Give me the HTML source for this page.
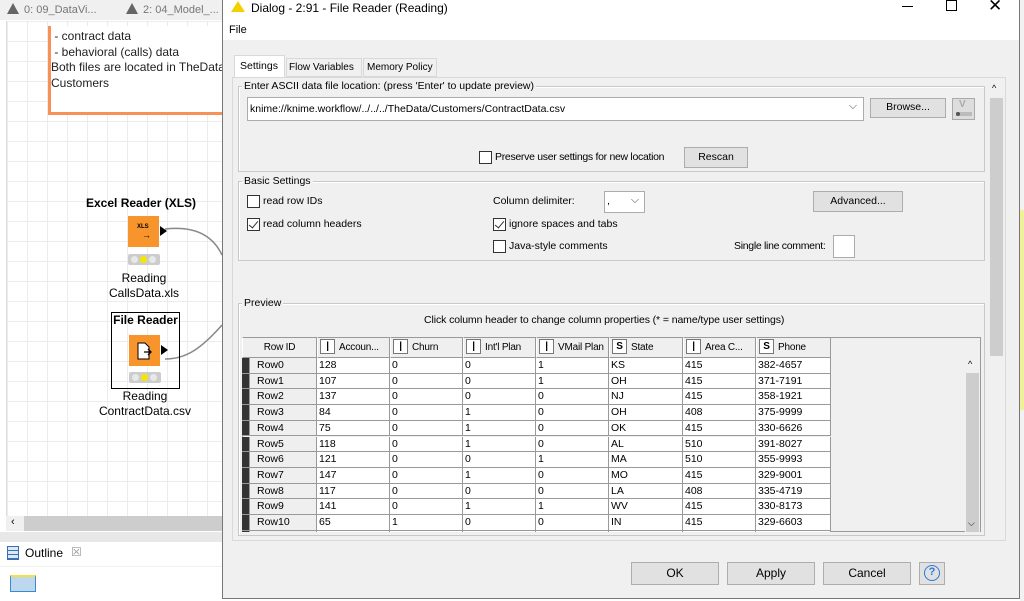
<!DOCTYPE html>
<html><head><meta charset="utf-8"><style>
*{box-sizing:border-box;margin:0;padding:0}
body{width:1024px;height:601px;overflow:hidden;position:relative;background:#fff;font-family:"Liberation Sans",sans-serif;font-size:10.5px;color:#000;white-space:nowrap}
.a{position:absolute}
.grid{background-color:#fff;background-image:linear-gradient(#ececec 1px,transparent 1px),linear-gradient(90deg,#ececec 1px,transparent 1px);background-size:20px 20px}
.btn{position:absolute;background:#e1e1e1;border:1px solid #adadad;text-align:center;font-size:10.5px}
.fs{position:absolute;border:1px solid #c8c8c8;box-shadow:inset 1px 1px 0 #fff}
.lg{position:absolute;background:#f0f0f0;padding:0 2px;font-size:10.5px}
.cb{position:absolute;width:13px;height:13px;border:1px solid #333;background:#fff}
.ck::after{content:"";position:absolute;left:3px;top:0px;width:4px;height:8px;border:solid #333;border-width:0 1px 1px 0;transform:rotate(40deg)}
.row{position:absolute;left:242px;height:15.7px;display:flex;font-size:10.5px}
.row div{border-right:1px solid #999;border-bottom:1px solid #999;background:#fff;padding-left:2px;line-height:14px;overflow:hidden;white-space:nowrap}
.hd{position:absolute;top:337px;height:21px;display:flex}
.hd div{background:#efefef;border:1px solid #999;border-left:1px solid #fff;font-size:10px;line-height:19px;white-space:nowrap;overflow:hidden;letter-spacing:-0.2px}
.ti{display:inline-block;width:15px;height:15px;border:1px solid #777;background:#fff;text-align:center;line-height:13px;font-size:10px;font-weight:bold;margin:1px 4px 0 2px;vertical-align:top}
</style></head><body>
<div class="a" style="left:0;top:0;width:222px;height:20px;background:#f0f0f0;color:#777;font-size:11px">
<span class="a" style="left:7px;top:3px;width:0;height:0;border-left:6px solid transparent;border-right:6px solid transparent;border-bottom:11px solid #666"></span>
<span class="a" style="left:24px;top:4px">0: 09_DataVi...</span>
<span class="a" style="left:126px;top:3px;width:0;height:0;border-left:6px solid transparent;border-right:6px solid transparent;border-bottom:11px solid #666"></span>
<span class="a" style="left:143px;top:4px">2: 04_Model_...</span>
</div>
<div class="a grid" style="left:6px;top:21px;width:216px;height:495px;border-left:1px solid #ddd"></div>
<div class="a" style="left:48px;top:26px;width:174px;height:89px;background:#fff;border-left:3px solid #f7915a;border-bottom:3px solid #f7915a"></div>
<div class="a" style="left:51px;top:29px;font-size:12px;line-height:15.5px;color:#222;white-space:nowrap;width:171px;overflow:hidden"> &nbsp;- contract data<br> &nbsp;- behavioral (calls) data<br>Both files are located in TheData/<br>Customers</div>
<div class="a" style="left:86px;top:196px;font-weight:bold;font-size:12px">Excel Reader (XLS)</div>
<div class="a" style="left:128px;top:216px;width:31px;height:31px;background:#f7942c"><span class="a" style="left:9px;top:8px;font-size:6px;font-weight:bold">XLS</span><span class="a" style="left:14px;top:14px;font-size:9px;font-weight:bold">→</span></div>
<div class="a" style="left:160px;top:226px;border-top:5px solid transparent;border-bottom:5px solid transparent;border-left:7px solid #000"></div>
<div class="a" style="left:128px;top:254px;width:32px;height:11px;background:#ccc;border-radius:2px"><span class="a" style="left:3px;top:2px;width:7px;height:7px;border-radius:50%;background:#e8e8e8"></span><span class="a" style="left:12px;top:2px;width:7px;height:7px;border-radius:50%;background:#f5e600"></span><span class="a" style="left:21px;top:2px;width:7px;height:7px;border-radius:50%;background:#e8e8e8"></span></div>
<div class="a" style="left:100px;top:271px;width:88px;text-align:center;font-size:12px;line-height:15px">Reading<br>CallsData.xls</div>
<svg class="a" style="left:160px;top:220px" width="64" height="140"><path d="M5 9 C40 5 55 20 62 35" stroke="#888" stroke-width="1.5" fill="none"/><path d="M5 139 C25 139 40 130 62 105" stroke="#888" stroke-width="1.5" fill="none"/></svg>
<div class="a" style="left:111px;top:312px;width:69px;height:77px;border:1px solid #000"></div>
<div class="a" style="left:112px;top:313px;width:67px;text-align:center;font-weight:bold;font-size:12px">File Reader</div>
<div class="a" style="left:129px;top:335px;width:31px;height:31px;background:#f7942c"><svg width="31" height="31"><path d="M9 8h7l4 4v12H9z" fill="#fff" stroke="#000"/><path d="M15 17h7M19 14l3 3-3 3" stroke="#000" fill="none" stroke-width="1.3"/></svg></div>
<div class="a" style="left:161px;top:345px;border-top:5px solid transparent;border-bottom:5px solid transparent;border-left:7px solid #000"></div>
<div class="a" style="left:129px;top:372px;width:32px;height:11px;background:#ccc;border-radius:2px"><span class="a" style="left:3px;top:2px;width:7px;height:7px;border-radius:50%;background:#e8e8e8"></span><span class="a" style="left:12px;top:2px;width:7px;height:7px;border-radius:50%;background:#f5e600"></span><span class="a" style="left:21px;top:2px;width:7px;height:7px;border-radius:50%;background:#e8e8e8"></span></div>
<div class="a" style="left:90px;top:389px;width:110px;text-align:center;font-size:12px;line-height:15px">Reading<br>ContractData.csv</div>
<div class="a" style="left:6px;top:516px;width:216px;height:15px;background:#f0f0f0"><div class="a" style="left:18px;top:0;width:198px;height:15px;background:#cdcdcd"></div><span class="a" style="left:5px;top:0px;font-size:11px">‹</span></div>
<div class="a" style="left:0;top:532px;width:222px;height:10px;background:#e8e8e8"></div>
<div class="a" style="left:0;top:542px;width:222px;height:59px;background:#fff"></div>
<div class="a" style="left:0;top:566px;width:222px;height:1px;background:#f0f0f0"></div>
<div class="a" style="left:7px;top:546px;width:12px;height:14px;border:1px solid #3a70b0;background:repeating-linear-gradient(#dbe8f5 0 3px,#3a70b0 3px 4px)"></div>
<div class="a" style="left:25px;top:546px;font-size:12px">Outline</div>
<div class="a" style="left:71px;top:545px;color:#999;font-size:12px">☒</div>
<div class="a" style="left:10px;top:575px;width:26px;height:17px;border:1px solid #3a8ad0;border-top:2px solid #f3e23c;background:#bcd7ee"></div>
<!-- dialog -->
<div class="a" style="left:222px;top:0;width:798px;height:599px;background:#f0f0f0;border:1px solid #777;border-top:none"></div>
<div class="a" style="left:1020px;top:0;width:4px;height:601px;background:#f2f2f2"></div>
<div class="a" style="left:1020px;top:210px;width:4px;height:200px;background:#f0ef9a"></div>
<div class="a" style="left:223px;top:0;width:796px;height:40px;background:#fff"></div>
<div class="a" style="left:231px;top:1px;width:0;height:0;border-left:7px solid transparent;border-right:7px solid transparent;border-bottom:11px solid #f5d000"></div>
<div class="a" style="left:251px;top:1px;font-size:12px">Dialog - 2:91 - File Reader (Reading)</div>
<div class="a" style="left:229px;top:24px;font-size:11px">File</div>
<div class="a" style="left:902px;top:6px;width:11px;height:1px;background:#000"></div>
<div class="a" style="left:946px;top:0px;width:11px;height:11px;border:1px solid #000"></div>
<div class="a" style="left:988px;top:-4px;font-size:17px">✕</div>
<!-- tabs -->
<div class="a" style="left:234px;top:55px;width:51px;height:23px;background:#fff;border:1px solid #d9d9d9;border-bottom:none;padding:4px 0 0 5px">Settings</div>
<div class="a" style="left:286px;top:58px;width:76px;height:19px;background:#f0f0f0;border:1px solid #d9d9d9;padding:3px 0 0 2px;font-size:10px">Flow Variables</div>
<div class="a" style="left:363px;top:58px;width:74px;height:19px;background:#f0f0f0;border:1px solid #d9d9d9;padding:3px 0 0 3px;font-size:10px">Memory Policy</div>
<div class="a" style="left:232px;top:77px;width:774px;height:464px;border:1px solid #d9d9d9;background:#f0f0f0"></div>
<div class="a" style="left:988px;top:80px;width:17px;height:460px;background:#f0f0f0"><div class="a" style="left:2px;top:18px;width:13px;height:258px;background:#cdcdcd"></div><span class="a" style="left:4px;top:3px;font-size:9px">^</span></div>
<!-- group 1 -->
<div class="fs" style="left:238px;top:86px;width:747px;height:86px"></div>
<div class="lg" style="left:242px;top:80px">Enter ASCII data file location: (press 'Enter' to update preview)</div>
<div class="a" style="left:247px;top:97px;width:617px;height:24px;background:#fff;border:1px solid #acacac;padding:5px 0 0 2px">knime://knime.workflow/../../../TheData/Customers/ContractData.csv<span class="a" style="right:6px;top:2px;color:#555">⌵</span></div>
<div class="btn" style="left:870px;top:98px;width:76px;height:20px;line-height:17px">Browse...</div>
<div class="a" style="left:952px;top:98px;width:23px;height:22px;background:#ddd;border:1px solid #aaa"><span class="a" style="left:6px;top:0;color:#aaa;font-weight:bold;font-size:10px">V</span><span class="a" style="left:3px;top:13px;width:16px;height:4px;background:#bbb"></span><span class="a" style="left:3px;top:13px;width:4px;height:4px;border-radius:50%;background:#555"></span></div>
<div class="cb" style="left:479px;top:151px"></div>
<div class="a" style="left:495px;top:151px;letter-spacing:-0.3px">Preserve user settings for new location</div>
<div class="btn" style="left:684px;top:147px;width:64px;height:21px;line-height:18px">Rescan</div>
<!-- basic settings -->
<div class="fs" style="left:238px;top:181px;width:747px;height:80px"></div>
<div class="lg" style="left:242px;top:175px">Basic Settings</div>
<div class="cb" style="left:247px;top:195px"></div><div class="a" style="left:263px;top:195px">read row IDs</div>
<div class="cb ck" style="left:247px;top:218px"></div><div class="a" style="left:263px;top:218px">read column headers</div>
<div class="a" style="left:493px;top:195px">Column delimiter:</div>
<div class="a" style="left:604px;top:191px;width:41px;height:22px;background:#fff;border:1px solid #acacac;padding:3px 0 0 2px">,<span class="a" style="right:5px;top:2px;color:#555">⌵</span></div>
<div class="cb ck" style="left:493px;top:218px"></div><div class="a" style="left:509px;top:218px">ignore spaces and tabs</div>
<div class="cb" style="left:493px;top:240px"></div><div class="a" style="left:509px;top:240px">Java-style comments</div>
<div class="btn" style="left:813px;top:191px;width:90px;height:21px;line-height:18px">Advanced...</div>
<div class="a" style="left:734px;top:240px;letter-spacing:-0.3px">Single line comment:</div>
<div class="a" style="left:833px;top:235px;width:22px;height:23px;background:#fff;border:1px solid #acacac"></div>
<!-- preview -->
<div class="fs" style="left:238px;top:303px;width:747px;height:233px"></div>
<div class="lg" style="left:242px;top:297px">Preview</div>
<div class="a" style="left:424px;top:314px;letter-spacing:-0.1px">Click column header to change column properties (* = name/type user settings)</div>
<div class="a" style="left:242px;top:337px;width:739px;height:195px;border:1px solid #999;background:#f0f0f0"></div>
<div class="hd" style="left:242px">
<div style="width:75px;text-align:center">Row ID</div>
<div style="width:73px"><span class="ti">|</span>Accoun...</div>
<div style="width:73px"><span class="ti">|</span>Churn</div>
<div style="width:73px"><span class="ti">|</span>Int'l Plan</div>
<div style="width:73px"><span class="ti">|</span>VMail Plan</div>
<div style="width:74px"><span class="ti">S</span>State</div>
<div style="width:73px"><span class="ti">|</span>Area C...</div>
<div style="width:75px"><span class="ti">S</span>Phone</div>
</div>
<div class="a" style="left:965px;top:358px;width:15px;height:174px;background:#f0f0f0"><div class="a" style="left:1px;top:15px;width:13px;height:159px;background:#cdcdcd"></div><span class="a" style="left:3px;top:1px;font-size:9px">^</span><span class="a" style="left:3px;top:160px;font-size:9px">⌵</span></div>
<div class="a" style="left:242px;top:358px;width:723px;height:174px;overflow:hidden">
<div style="position:relative;left:-242px;top:-358px">
<div class="row" style="top:358px"><div style="width:8px;background:#333;padding:0"></div><div style="width:67px;background:#efefef;padding-left:7px">Row0</div><div style="width:73px">128</div><div style="width:73px">0</div><div style="width:73px">0</div><div style="width:73px">1</div><div style="width:74px">KS</div><div style="width:73px">415</div><div style="width:75px">382-4657</div></div>
<div class="row" style="top:373.7px"><div style="width:8px;background:#333;padding:0"></div><div style="width:67px;background:#efefef;padding-left:7px">Row1</div><div style="width:73px">107</div><div style="width:73px">0</div><div style="width:73px">0</div><div style="width:73px">1</div><div style="width:74px">OH</div><div style="width:73px">415</div><div style="width:75px">371-7191</div></div>
<div class="row" style="top:389.4px"><div style="width:8px;background:#333;padding:0"></div><div style="width:67px;background:#efefef;padding-left:7px">Row2</div><div style="width:73px">137</div><div style="width:73px">0</div><div style="width:73px">0</div><div style="width:73px">0</div><div style="width:74px">NJ</div><div style="width:73px">415</div><div style="width:75px">358-1921</div></div>
<div class="row" style="top:405.1px"><div style="width:8px;background:#333;padding:0"></div><div style="width:67px;background:#efefef;padding-left:7px">Row3</div><div style="width:73px">84</div><div style="width:73px">0</div><div style="width:73px">1</div><div style="width:73px">0</div><div style="width:74px">OH</div><div style="width:73px">408</div><div style="width:75px">375-9999</div></div>
<div class="row" style="top:420.8px"><div style="width:8px;background:#333;padding:0"></div><div style="width:67px;background:#efefef;padding-left:7px">Row4</div><div style="width:73px">75</div><div style="width:73px">0</div><div style="width:73px">1</div><div style="width:73px">0</div><div style="width:74px">OK</div><div style="width:73px">415</div><div style="width:75px">330-6626</div></div>
<div class="row" style="top:436.5px"><div style="width:8px;background:#333;padding:0"></div><div style="width:67px;background:#efefef;padding-left:7px">Row5</div><div style="width:73px">118</div><div style="width:73px">0</div><div style="width:73px">1</div><div style="width:73px">0</div><div style="width:74px">AL</div><div style="width:73px">510</div><div style="width:75px">391-8027</div></div>
<div class="row" style="top:452.2px"><div style="width:8px;background:#333;padding:0"></div><div style="width:67px;background:#efefef;padding-left:7px">Row6</div><div style="width:73px">121</div><div style="width:73px">0</div><div style="width:73px">0</div><div style="width:73px">1</div><div style="width:74px">MA</div><div style="width:73px">510</div><div style="width:75px">355-9993</div></div>
<div class="row" style="top:467.9px"><div style="width:8px;background:#333;padding:0"></div><div style="width:67px;background:#efefef;padding-left:7px">Row7</div><div style="width:73px">147</div><div style="width:73px">0</div><div style="width:73px">1</div><div style="width:73px">0</div><div style="width:74px">MO</div><div style="width:73px">415</div><div style="width:75px">329-9001</div></div>
<div class="row" style="top:483.6px"><div style="width:8px;background:#333;padding:0"></div><div style="width:67px;background:#efefef;padding-left:7px">Row8</div><div style="width:73px">117</div><div style="width:73px">0</div><div style="width:73px">0</div><div style="width:73px">0</div><div style="width:74px">LA</div><div style="width:73px">408</div><div style="width:75px">335-4719</div></div>
<div class="row" style="top:499.3px"><div style="width:8px;background:#333;padding:0"></div><div style="width:67px;background:#efefef;padding-left:7px">Row9</div><div style="width:73px">141</div><div style="width:73px">0</div><div style="width:73px">1</div><div style="width:73px">1</div><div style="width:74px">WV</div><div style="width:73px">415</div><div style="width:75px">330-8173</div></div>
<div class="row" style="top:515px"><div style="width:8px;background:#333;padding:0"></div><div style="width:67px;background:#efefef;padding-left:7px">Row10</div><div style="width:73px">65</div><div style="width:73px">1</div><div style="width:73px">0</div><div style="width:73px">0</div><div style="width:74px">IN</div><div style="width:73px">415</div><div style="width:75px">329-6603</div></div>
<div class="row" style="top:530.7px"><div style="width:8px;background:#333;padding:0"></div><div style="width:67px;background:#efefef"></div><div style="width:73px"></div><div style="width:73px"></div><div style="width:73px"></div><div style="width:73px"></div><div style="width:74px"></div><div style="width:73px"></div><div style="width:75px"></div></div>
</div></div>
<div class="btn" style="left:631px;top:562px;width:88px;height:23px;line-height:21px;font-size:12px">OK</div>
<div class="btn" style="left:727px;top:562px;width:88px;height:23px;line-height:21px;font-size:12px">Apply</div>
<div class="btn" style="left:823px;top:562px;width:88px;height:23px;line-height:21px;font-size:12px">Cancel</div>
<div class="btn" style="left:919px;top:562px;width:26px;height:23px"><span class="a" style="left:4px;top:2px;width:16px;height:16px;border-radius:50%;border:1.5px solid #2a7ad8;color:#2a7ad8;font-size:11px;font-weight:bold;line-height:13px">?</span></div>
</body></html>
